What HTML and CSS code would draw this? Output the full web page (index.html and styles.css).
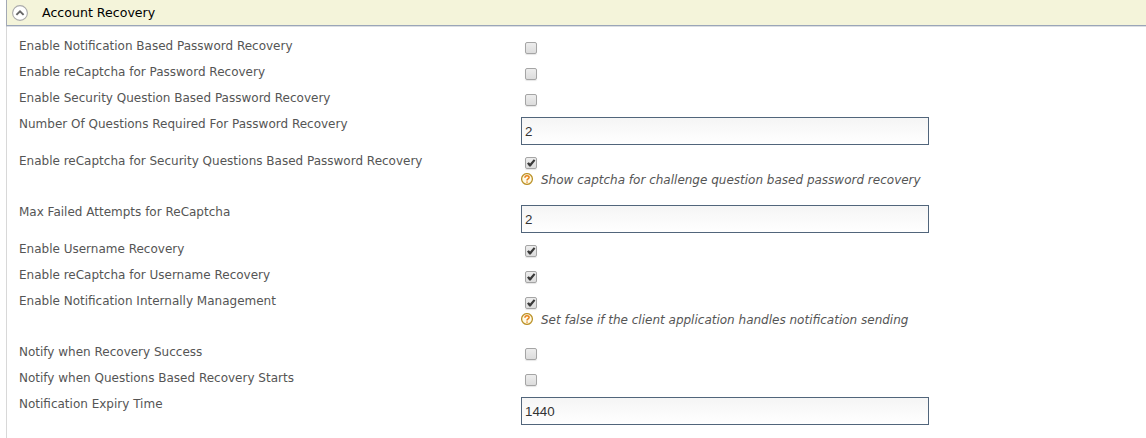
FILE: index.html
```html
<!DOCTYPE html>
<html lang="en">
<head>
<meta charset="utf-8">
<title>Account Recovery</title>
<link rel="stylesheet" href="styles.css">
</head>
<body>
<svg class="defs" aria-hidden="true">
  <symbol id="help" viewBox="0 0 12 12"><circle cx="6" cy="6" r="5.4" fill="#fffbe6" stroke="#bd942c" stroke-width="1.3"/><path d="M3.9 4.8C3.9 2 8.1 2 8.1 4.5C8.1 5.9 6 5.9 6 7.4M6 8.4V9.8" fill="none" stroke="#e8811a" stroke-width="1.5"/></symbol>
  <symbol id="tick" viewBox="0 0 12 12"><path d="M2 6.6L3.8 5.2L5.1 6.5L8.8 2.2L10.4 3.6L5.7 9.6H4.3Z" fill="#3a3a3a"/></symbol>
</svg>
<main class="panel">
  <header class="heading">
    <svg class="toggle" viewBox="0 0 16 16"><circle cx="8" cy="8" r="7.4" fill="#fff" stroke="#aaa" stroke-width="1.1"/><path d="M4.4 9.9L8 6.3L11.6 9.9" fill="none" stroke="#666" stroke-width="1.9"/></svg>
    <h2 class="title">Account Recovery</h2>
  </header>
  <div class="form">
    <div class="row"><span class="label">Enable Notification Based Password Recovery</span><span class="check"></span></div>
    <div class="row"><span class="label">Enable reCaptcha for Password Recovery</span><span class="check"></span></div>
    <div class="row"><span class="label">Enable Security Question Based Password Recovery</span><span class="check"></span></div>
    <div class="row input-row"><span class="label">Number Of Questions Required For Password Recovery</span><input class="field" type="text" value="2"></div>
    <div class="row help-row"><span class="label">Enable reCaptcha for Security Questions Based Password Recovery</span><div><span class="check"><svg class="tick"><use href="#tick"/></svg></span><div class="help"><svg class="help-icon"><use href="#help"/></svg><span>Show captcha for challenge question based password recovery</span></div></div></div>
    <div class="row input-row"><span class="label">Max Failed Attempts for ReCaptcha</span><input class="field" type="text" value="2"></div>
    <div class="row"><span class="label">Enable Username Recovery</span><span class="check"><svg class="tick"><use href="#tick"/></svg></span></div>
    <div class="row"><span class="label">Enable reCaptcha for Username Recovery</span><span class="check"><svg class="tick"><use href="#tick"/></svg></span></div>
    <div class="row help-row"><span class="label">Enable Notification Internally Management</span><div><span class="check"><svg class="tick"><use href="#tick"/></svg></span><div class="help"><svg class="help-icon"><use href="#help"/></svg><span>Set false if the client application handles notification sending</span></div></div></div>
    <div class="row"><span class="label">Notify when Recovery Success</span><span class="check"></span></div>
    <div class="row"><span class="label">Notify when Questions Based Recovery Starts</span><span class="check"></span></div>
    <div class="row input-row"><span class="label">Notification Expiry Time</span><input class="field" type="text" value="1440"></div>
  </div>
</main>
</body>
</html>
```
FILE: styles.css
```css
* { box-sizing: border-box; }
body {
  margin: 0;
  overflow: hidden;
  background: #fff;
  color: #555;
  font: 12px/20px "DejaVu Sans", sans-serif;
}
.defs { display: none; }
.panel {
  height: 438px;
  margin-left: 6px;
  border-left: 1px solid #d8d8d8;
}
.heading {
  display: flex;
  align-items: center;
  height: 27px;
  margin-left: -1px;
  padding: 0 0 1px 5px;
  background: #f4f4da;
  border-left: 1px solid #a3a9b5;
  border-bottom: 1px solid #dcdfe2;
  box-shadow: inset 0 -1px #9aa5b8;
}
.toggle { width: 16px; height: 16px; margin-right: 14px; }
.title { margin: 0; color: #000; font-size: 12.6px; font-weight: normal; }
.form { padding: 9px 0 0 12px; }
.row {
  display: grid;
  grid-template-columns: 502px 1fr;
  align-items: start;
  height: 26px;
}
.input-row { height: 37px; }
.help-row { height: 51px; }
.check {
  display: block;
  width: 12px;
  height: 12px;
  margin: 6px 0 0 4px;
  border: 1px solid #a5a5a5;
  border-radius: 2px;
  background: linear-gradient(#ededed, #dcdcdc);
  box-shadow: 0 1px 1px #e6e6e6;
}
.tick { display: block; width: 12px; height: 12px; margin: -1px; overflow: visible; }
.field {
  width: 408px;
  height: 28px;
  margin-top: 3px;
  padding: 1px 3px 0;
  border: 1px solid #51657b;
  border-radius: 0;
  background: linear-gradient(#f5f5f5, #fff);
  color: #333;
  font: 13.333px "Liberation Sans", sans-serif;
}
.help { display: flex; align-items: center; gap: 8px; margin-top: 1px; font-style: italic; }
.help-icon { width: 12px; height: 12px; margin-bottom: 2px; overflow: visible; }
```
